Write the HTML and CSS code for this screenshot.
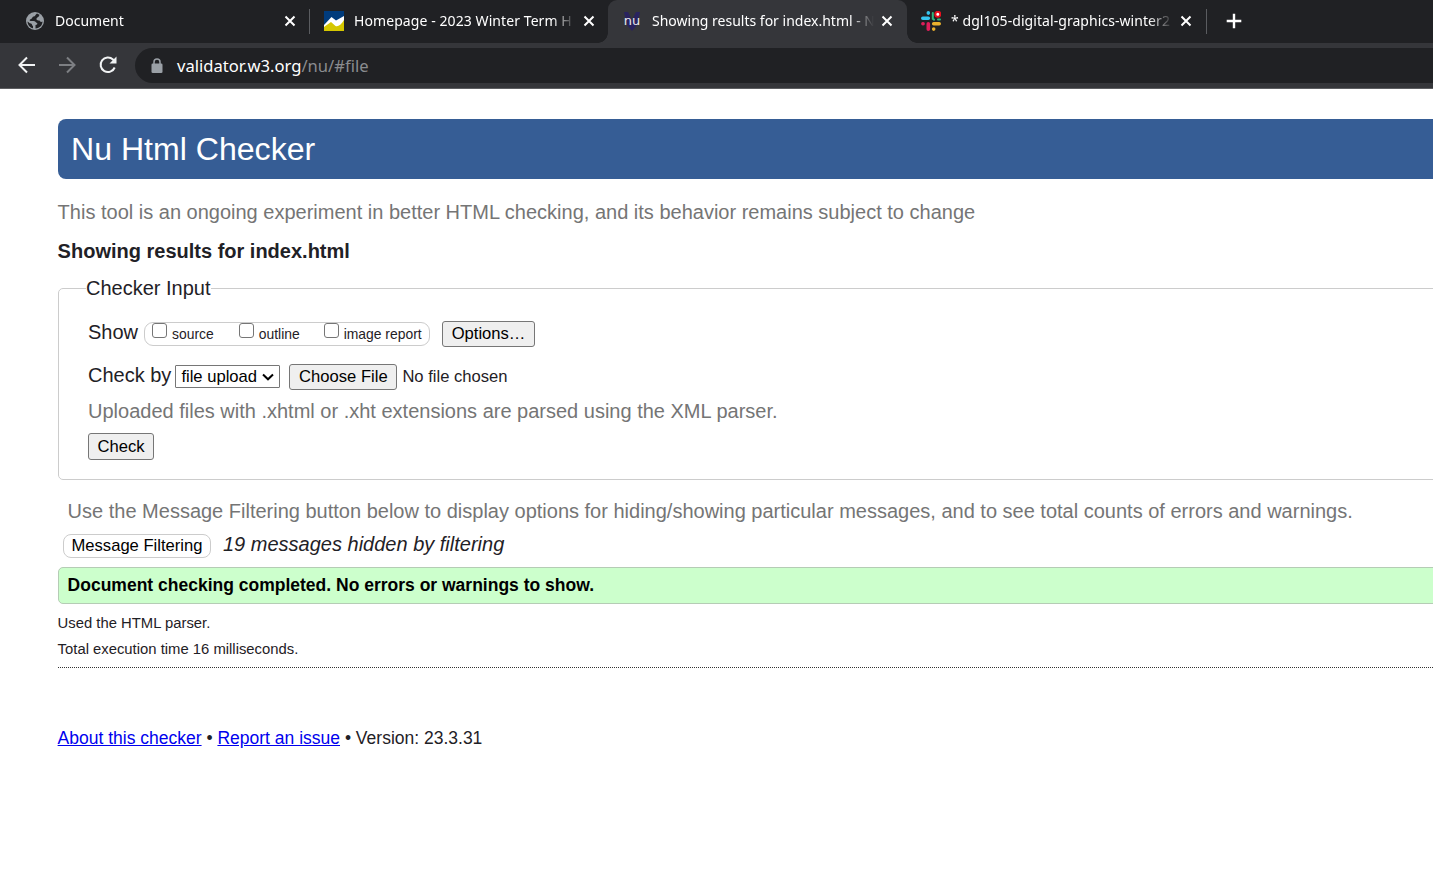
FILE: index.html
```
<!DOCTYPE html>
<html lang="en">
<head>
<meta charset="utf-8">
<title>Showing results for index.html - Nu Html Checker</title>
<link rel="stylesheet" href="styles.css">
</head>
<body>
<div class="browser">
  <div class="tabs">
    <div class="tab">
      <svg class="icon" viewBox="0 0 20 20"><circle cx="10" cy="10" r="9" fill="#9aa0a6"/><path d="M12 2.600C10 4 10.500 5.500 8.500 5.500C7 6 7.500 7.500 6 8C4.500 8.500 4 9.500 5.500 10H8.500C10.500 10 10.500 11.500 12 12C13 12.500 12 14 10.500 14V17.500C15 17.300 17.500 14 17.500 10.500C16 11.500 15 10.500 14.500 9.500C12.500 9.500 11 9 11.500 7.500C12 6 13.500 6.500 14 5L14.500 3.800ZM2.500 10.500C2.700 14 5 16.700 8 17.300V15C6.500 14.500 7.500 13 6 12.500C4 12.500 4 11 2.500 10.500Z" fill="#202124"/></svg>
      <span class="title">Document</span>
      <svg class="close" viewBox="0 0 12 12"><path d="M1.500 1.500L10.500 10.500M10.500 1.500L1.500 10.500"/></svg>
    </div>
    <div class="tab divided">
      <svg class="icon" viewBox="0 0 20 20"><path fill="#003b7c" d="M0 0H20V20H0Z"/><path fill="#d5c700" d="M0 15L7 10L12 14L20 8V20H0Z"/><path fill="#fff" d="M0 14L7.500 6L12 9.500L20 5V9C17 14 14 16 11.500 15L7 11L0 16Z"/></svg>
      <span class="title wide">Homepage - 2023 Winter Term H</span>
      <svg class="close" viewBox="0 0 12 12"><path d="M1.500 1.500L10.500 10.500M10.500 1.500L1.500 10.500"/></svg>
    </div>
    <div class="tab active">
      <span class="icon nu"><svg class="nuback" viewBox="0 0 20 20"><path d="M2 1H6L10 9L14 1H18L15 14L10 20L5 14Z" fill="#29235f"/></svg><b>nu</b></span>
      <span class="title">Showing results for index.html - N</span>
      <svg class="close" viewBox="0 0 12 12"><path d="M1.500 1.500L10.500 10.500M10.500 1.500L1.500 10.500"/></svg>
    </div>
    <div class="tab last">
      <svg class="icon" viewBox="0 0 20 20" fill="none" stroke-width="3.600" stroke-linecap="round"><path stroke="#36c5f0" d="M1.800 7.300H7.300M7.300 1.900V2.100"/><path stroke="#2eb67d" stroke-width="2" d="M11.800 2V7.800L13 8.600M17 8.600H19"/><path stroke="#ecb22e" d="M12.700 12.700H18.200M12.700 18V18.100"/><path stroke="#e01e5a" d="M7.300 12.700V18.200M1.900 12.700H2.100"/><circle cx="16.800" cy="3.300" r="2.500" stroke="#e8101d" stroke-width="2" fill="#fff"/></svg>
      <span class="title">* dgl105-digital-graphics-winter2</span>
      <svg class="close" viewBox="0 0 12 12"><path d="M1.500 1.500L10.500 10.500M10.500 1.500L1.500 10.500"/></svg>
    </div>
    <div class="newtab divided"><svg viewBox="0 0 16 16"><path d="M8 .7V15.300M.7 8H15.300"/></svg></div>
  </div>
  <div class="toolbar">
    <svg class="nav" viewBox="0 0 20 20"><path d="M18 10H3M10 2.500L2.500 10L10 17.500"/></svg>
    <svg class="nav dim" viewBox="0 0 20 20"><path d="M2 10H17M10 2.500L17.500 10L10 17.500"/></svg>
    <svg class="nav" viewBox="0 0 20 20"><path d="M16.700 12.500A7.300 7.300 0 1 1 15 4.500L17 6.500"/><path class="tip" d="M18.500 1.500V8.500H11.500Z"/></svg>
    <div class="address">
      <svg class="lock" viewBox="0 0 12 16"><rect x=".5" y="5.500" width="11" height="9.500" rx="1.300" fill="#9aa0a6"/><path d="M3 6V4A3 3 0 0 1 9 4V6" fill="none" stroke="#9aa0a6" stroke-width="1.500"/></svg>
      <span class="url">validator.w3.org<span>/nu/#file</span></span>
    </div>
  </div>
</div>
<main>
  <h1>Nu Html Checker</h1>
  <p class="tagline">This tool is an ongoing experiment in better HTML checking, and its behavior remains subject to change</p>
  <h2>Showing results for index.html</h2>
  <fieldset>
    <legend>Checker Input</legend>
    <div class="row show">
      <span>Show</span>
      <div class="checks">
        <label><input type="checkbox">source</label>
        <label><input type="checkbox">outline</label>
        <label><input type="checkbox">image report</label>
      </div>
      <button class="btn options">Options…</button>
    </div>
    <div class="row by">
      <span>Check by</span>
      <div class="select">file upload<svg viewBox="0 0 12 8"><path d="M1 1.500L6 6.300L11 1.500"/></svg></div>
      <button class="btn choose">Choose File</button>
      <span class="nofile">No file chosen</span>
    </div>
    <p class="hint">Uploaded files with .xhtml or .xht extensions are parsed using the XML parser.</p>
    <button class="btn check">Check</button>
  </fieldset>
  <p class="filterhint">Use the Message Filtering button below to display options for hiding/showing particular messages, and to see total counts of errors and warnings.</p>
  <div class="filter"><button>Message Filtering</button><i>19 messages hidden by filtering</i></div>
  <p class="success">Document checking completed. No errors or warnings to show.</p>
  <p class="detail">Used the HTML parser.</p>
  <p class="detail">Total execution time 16 milliseconds.</p>
  <hr>
  <footer><a href="#">About this checker</a> • <a href="#">Report an issue</a> • Version: 23.3.31</footer>
</main>
</body>
</html>
```
FILE: styles.css
```
* { box-sizing: border-box; }
body { margin: 0; height: 873px; overflow: hidden; background: #fff; color: #1f2126; font-family: "Liberation Sans", Arial, sans-serif; font-size: 20px; line-height: 24px; }
p, h1, h2 { margin: 0; }
svg { display: block; flex: none; }

.browser { height: 89px; background: #35363a; border-bottom: 1px solid #5d5e61; color: #fff; font-family: "Noto Sans", "Open Sans", sans-serif; }
.tabs { height: 43px; display: flex; padding-left: 10px; background: #202124; }
.tab { position: relative; width: 299px; flex: none; display: flex; align-items: center; padding: 0 13px 1px 14px; }
.active { background: #35363a; border-radius: 9px 9px 0 0; }
.active, .last { padding-left: 13px; }
.active::before, .active::after { content: ""; position: absolute; bottom: 0; width: 10px; height: 10px; }
.active::before { left: -10px; background: radial-gradient(circle at 0 0, #202124 9.500px, #35363a 10px); }
.active::after { right: -10px; background: radial-gradient(circle at 100% 0, #202124 9.500px, #35363a 10px); }
.divided::before { content: ""; position: absolute; left: 0; top: 9px; width: 1px; height: 25px; background: #5a5c60; }
.icon { width: 20px; height: 20px; margin: 0 10px 0 1px; flex: none; }
.nu { position: relative; font: 13px/19px "DejaVu Sans", sans-serif; color: #e8e8ee; text-align: center; }
.nuback { position: absolute; inset: 0; }
.nu b { position: relative; font-weight: normal; }
.title { width: 222px; height: 24px; line-height: 24px; flex: none; white-space: nowrap; font-size: 14px; -webkit-mask-image: linear-gradient(90deg, #000 198px, transparent 222px); }
.wide { letter-spacing: .08px; }
.last .title { letter-spacing: .06px; }
.close { width: 12px; height: 12px; margin-left: auto; margin-right: 0; fill: none; stroke: #fff; stroke-width: 2; }
.active .close, .last .close { margin-right: 1px; }
.newtab { position: relative; padding: 13px 0 0 20px; }
.newtab svg { width: 16px; height: 16px; stroke: #fff; stroke-width: 2.400; }
.toolbar { height: 45px; display: flex; align-items: center; padding: 0 0 1px 17px; }
.nav { width: 20px; height: 20px; margin-right: 20px; fill: none; stroke: #f1f3f4; stroke-width: 2; }
.dim { stroke: #7d7f83; margin-right: 21px; }
.nav .tip { fill: #f1f3f4; stroke: none; }
.address { flex: 1; height: 35px; margin: 1px 0 0 -3px; padding-left: 16px; display: flex; align-items: center; background: #202124; border-radius: 18px 0 0 18px; }
.lock { width: 12px; height: 16px; margin-right: 14px; }
.url { font-size: 16.600px; }
.url span { color: #8a8c8f; }

main { padding: 30px 0 0 58px; white-space: nowrap; }
h1 { height: 60px; padding-left: 13px; background: #365d95; border-radius: 8px 0 0 8px; color: #fff; font-size: 32.100px; line-height: 60px; font-weight: 400; }
.tagline { margin-top: 21px; color: #757575; }
h2 { margin-top: 15px; font-size: 20px; line-height: 24px; }
.tagline, h2, .filterhint, .success, .detail, footer { text-indent: -.4px; }
fieldset { height: 204px; margin: 13px -10px 0 0; padding: 20px 0 0 29px; border: 1px solid #ccc; border-radius: 5px; min-width: 0; }
legend { margin-left: -2px; padding: 0; height: 24px; }
.row { display: flex; height: 27px; }
.checks { display: flex; width: 286px; height: 24px; margin: 2px 12px 0 6px; border: 1px solid #ccc; border-radius: 9px; font-size: 13.900px; line-height: 23px; }
.checks label { display: flex; }
.checks label:nth-child(2) { margin-left: 25px; }
.checks label:nth-child(3) { margin-left: 24px; }
.checks input { appearance: none; width: 15px; height: 15px; margin: 0 5px 0 7px; border: 1px solid #767676; border-radius: 3px; background: #fff; flex: none; }
.checks label + label input { margin-left: 0; }
.btn { padding: 0; border: 1px solid #767676; border-radius: 3px; background: #efefef; color: #000; font: 16.600px/22px "Liberation Sans", Arial, sans-serif; }
.options { width: 93px; height: 26px; margin-top: 1px; }
.by { margin-top: 16px; }
.select { display: flex; align-items: center; width: 105px; height: 23px; margin: 2px 9px 0 4px; padding-left: 5px; border: 1px solid #767676; border-radius: 1px; color: #000; font-size: 16.600px; line-height: 21px; }
.select svg { width: 12px; height: 8px; margin-left: 5px; fill: none; stroke: #000; stroke-width: 2; }
.choose { width: 108px; height: 26px; margin-top: 1px; }
.nofile { margin: 2px 0 0 5px; font-size: 16.600px; }
.hint { margin-top: 9px; color: #757575; }
.check { display: block; width: 66px; height: 27px; margin-top: 10px; }
.filterhint { margin: 19px 0 0 10px; color: #757575; }
.filter { display: flex; height: 26px; margin: 9px 0 0 5px; }
.filter button { width: 148px; height: 24px; margin: 2px 12px 0 0; padding: 0; border: 1px solid #ccc; border-radius: 8px; background: #fff; color: #000; font: 16.600px/20px "Liberation Sans", Arial, sans-serif; }
.success { height: 37px; margin: 9px -10px 7px 0; padding-left: 9px; border: 1px solid #b5ccb5; border-radius: 5px; background: #cfc; color: #000; font-size: 17.500px; line-height: 34px; font-weight: 700; }
.detail { height: 26px; font-size: 14.830px; }
hr { margin: 4px 0 0; border: 0; border-top: 1px dotted #333; }
footer { margin-top: 58px; font-size: 17.500px; }
a { color: #00e; text-decoration: underline; }
```
